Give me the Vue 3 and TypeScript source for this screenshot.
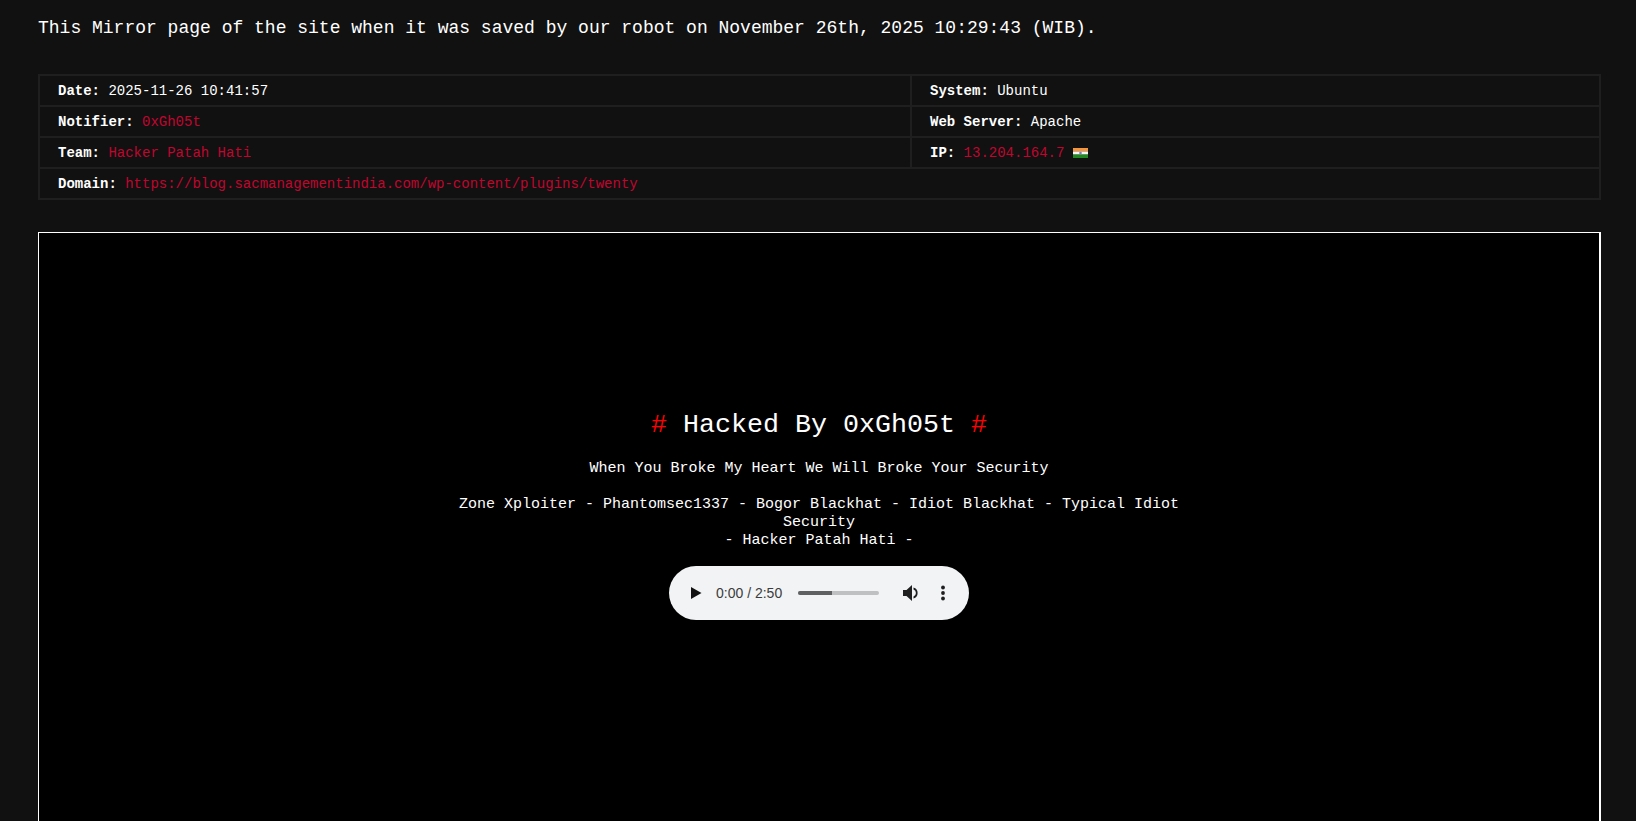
<script setup lang="ts">
const leftRows = [
  { label: 'Date:', value: '2025-11-26 10:41:57', link: false },
  { label: 'Notifier:', value: '0xGh05t', link: true },
  { label: 'Team:', value: 'Hacker Patah Hati', link: true }
]

const rightRows = [
  { label: 'System:', value: 'Ubuntu', link: false },
  { label: 'Web Server:', value: 'Apache', link: false },
  { label: 'IP:', value: '13.204.164.7', link: true }
]
</script>

<template>
  <div class="page">
    <p class="intro">This Mirror page of the site when it was saved by our robot on November 26th, 2025 10:29:43 (WIB).</p>

    <div class="info-table">
      <template v-for="(row, i) in leftRows" :key="row.label">
        <div class="cell left">
          <b>{{ row.label }}</b> <span :class="{ link: row.link }">{{ row.value }}</span>
        </div>
        <div class="cell">
          <b>{{ rightRows[i].label }}</b> <span :class="{ link: rightRows[i].link }">{{ rightRows[i].value }}</span>
          <svg v-if="rightRows[i].label === 'IP:'" class="flag" viewBox="0 0 15 10" width="15" height="10">
            <rect width="15" height="3.4" fill="#f7953b" />
            <rect y="3.4" width="15" height="3.2" fill="#f5f5f5" />
            <rect y="6.6" width="15" height="3.4" fill="#1f8a1f" />
            <circle cx="7.5" cy="5" r="1.3" fill="#7a7fb0" />
          </svg>
        </div>
      </template>
      <div class="cell wide">
        <b>Domain:</b> <span class="link">https://blog.sacmanagementindia.com/wp-content/plugins/twenty</span>
      </div>
    </div>

    <div class="mirror">
      <h1 class="title"><span class="hash">#</span> Hacked By 0xGh05t <span class="hash">#</span></h1>
      <p class="subtitle">When You Broke My Heart We Will Broke Your Security</p>
      <p class="crew">Zone Xploiter - Phantomsec1337 - Bogor Blackhat - Idiot Blackhat - Typical Idiot Security<br />- Hacker Patah Hati -</p>

      <!-- same look as the chrome audio player -->
      <div class="player">
        <svg class="icon" viewBox="0 0 24 24" width="24" height="24">
          <path d="M8 6v12l10.5-6z" fill="#111111" />
        </svg>
        <span class="time">0:00 / 2:50</span>
        <div class="track"><div class="track-fill"></div></div>
        <svg class="icon volume" viewBox="0 0 24 24" width="24" height="24">
          <path d="M4 9v6h3.5l5.5 5V4L7.5 9H4z" fill="#1f1f1f" />
          <path d="M14.5 6.6v2a3.6 3.6 0 0 1 0 6.8v2a5.6 5.6 0 0 0 0-10.8z" fill="#1f1f1f" />
        </svg>
        <svg class="icon more" viewBox="0 0 24 24" width="24" height="24">
          <circle cx="12" cy="6.5" r="1.9" fill="#1f1f1f" />
          <circle cx="12" cy="12" r="1.9" fill="#1f1f1f" />
          <circle cx="12" cy="17.5" r="1.9" fill="#1f1f1f" />
        </svg>
      </div>
    </div>
  </div>
</template>

<style scoped>
.page {
  box-sizing: border-box;
  height: 100vh;
  overflow: hidden;
  padding: 18px 35px 0 38px;
  background: #111111;
  color: #ffffff;
  font-family: "Liberation Mono", "DejaVu Sans Mono", monospace;
}

.intro {
  margin: 0 0 35px;
  font-size: 18px;
  line-height: 21px;
}

.info-table {
  display: grid;
  grid-template-columns: 872px 1fr;
  border: 2px solid #1f1f1f;
  font-size: 14px;
}

.cell {
  display: flex;
  align-items: center;
  gap: 8.4px;
  height: 29px;
  padding-left: 18px;
  border-bottom: 2px solid #1f1f1f;
  white-space: pre;
}

.left {
  border-right: 2px solid #1f1f1f;
}

.wide {
  grid-column: 1 / -1;
  border-bottom: none;
}

.link {
  color: #c1052f;
}

.mirror {
  box-sizing: border-box;
  display: flex;
  flex-direction: column;
  align-items: center;
  height: 800px;
  margin-top: 32px;
  padding-top: 176px;
  border: 1px solid #ffffff;
  border-right-width: 2px;
  background: #000000;
  text-align: center;
}

.title {
  margin: 0;
  font-size: 26.67px;
  font-weight: 400;
  line-height: 32px;
}

.hash {
  color: #ff0000;
}

.subtitle {
  margin: 19px 0 0;
  font-size: 15px;
  line-height: 18px;
}

.crew {
  width: 740px;
  margin: 18px 0 0;
  font-size: 15px;
  line-height: 18px;
}

.player {
  box-sizing: border-box;
  display: flex;
  align-items: center;
  width: 300px;
  height: 54px;
  margin-top: 16px;
  padding: 0 14px;
  border-radius: 27px;
  background: #f1f3f4;
  color: #3c3c3c;
  font-family: "Liberation Sans", Arial, sans-serif;
  font-size: 14px;
}

.icon {
  flex: none;
}

.time {
  margin-left: 9px;
  white-space: nowrap;
}

.track {
  flex: none;
  width: 81px;
  height: 4px;
  margin-left: 16px;
  border-radius: 2px;
  background: #bfc0c1;
  overflow: hidden;
}

.track-fill {
  width: 42%;
  height: 100%;
  background: #5f6061;
}

.volume {
  margin-left: 20px;
}

.more {
  margin-left: 8px;
}
</style>

<style>
html,
body {
  margin: 0;
  background: #111111;
}
</style>
